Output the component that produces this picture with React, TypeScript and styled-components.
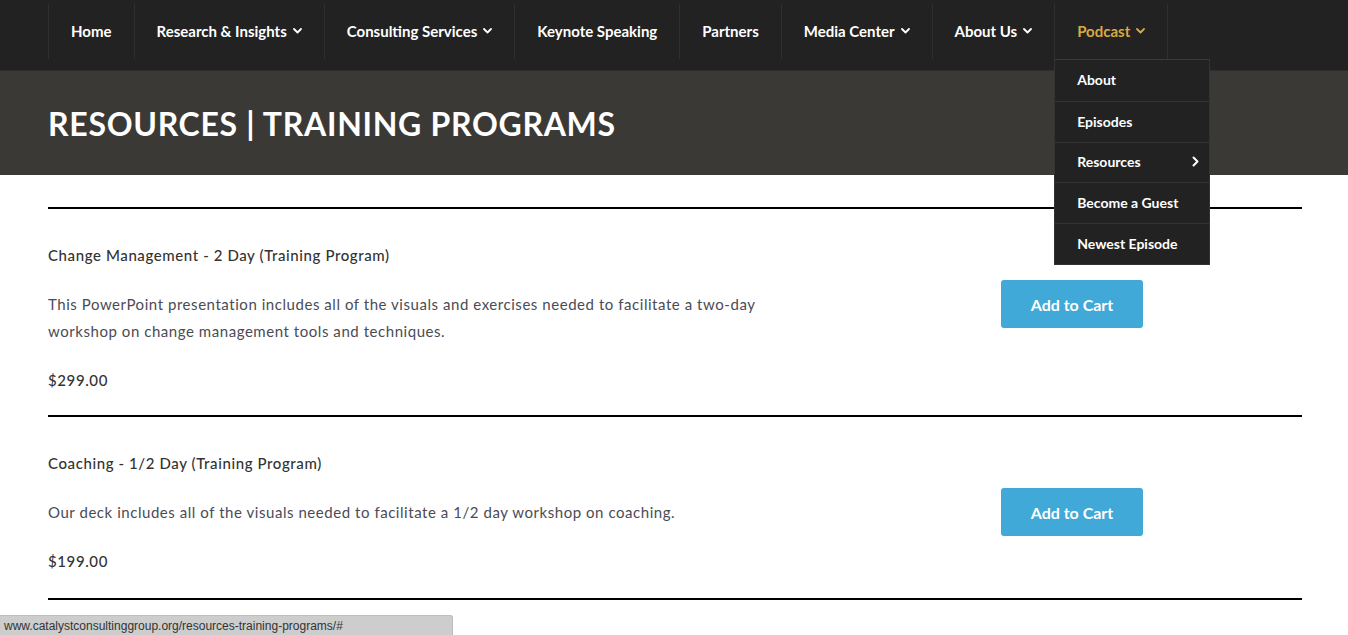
import styled, { createGlobalStyle } from "styled-components";

const GlobalStyle = createGlobalStyle`
  * { box-sizing: border-box; }
  html, body {
    margin: 0;
    padding: 0;
    background: #ffffff;
    font-family: Lato, "Open Sans", sans-serif;
  }
`;

const FONT = `Lato, "Open Sans", sans-serif`;

type TNavItem = {
  label: string;
  hasMenu?: boolean;
  active?: boolean;
};

const NAV_ITEMS: TNavItem[] = [
  { label: "Home" },
  { label: "Research & Insights", hasMenu: true },
  { label: "Consulting Services", hasMenu: true },
  { label: "Keynote Speaking" },
  { label: "Partners" },
  { label: "Media Center", hasMenu: true },
  { label: "About Us", hasMenu: true },
  { label: "Podcast", hasMenu: true, active: true },
];

const PODCAST_MENU = [
  { label: "About" },
  { label: "Episodes" },
  { label: "Resources", sub: true },
  { label: "Become a Guest" },
  { label: "Newest Episode" },
];

type TProduct = {
  title: string;
  description: string;
  price: string;
};

const PRODUCTS: TProduct[] = [
  {
    title: "Change Management - 2 Day (Training Program)",
    description:
      "This PowerPoint presentation includes all of the visuals and exercises needed to facilitate a two-day workshop on change management tools and techniques.",
    price: "$299.00",
  },
  {
    title: "Coaching - 1/2 Day (Training Program)",
    description:
      "Our deck includes all of the visuals needed to facilitate a 1/2 day workshop on coaching.",
    price: "$199.00",
  },
];

const SNav = styled.nav`
  height: 71px;
  background: #222222;
  border-bottom: 1px solid #2c2c2c;
  padding: 4px 48px 0;
  display: flex;
  align-items: flex-start;
  font-family: ${FONT};
  position: relative;
  z-index: 5;
`;

const SNavItem = styled.div<{ $active?: boolean }>`
  position: relative;
  height: 55px;
  padding: 0 22px 2px;
  display: flex;
  align-items: center;
  gap: 6px;
  border-left: 1px solid #2f2f2f;
  color: ${(p) => (p.$active ? "#d9a944" : "#ffffff")};
  font-size: 15px;
  font-weight: 700;
  white-space: nowrap;

  &:last-child {
    border-right: 1px solid #2f2f2f;
  }
`;

const SChevron = styled.svg`
  width: 9px;
  height: 6px;
  margin-top: 1px;
`;

const SDropdown = styled.div`
  position: absolute;
  top: 55px;
  left: -1px;
  width: 156px;
  background: #222222;
  border: 1px solid #333333;
  border-top-color: #3a3a3a;
`;

const SDropdownItem = styled.div`
  height: 40.8px;
  padding: 0 10px 1px 22px;
  display: flex;
  align-items: center;
  justify-content: space-between;
  color: #ffffff;
  font-size: 14px;
  font-weight: 700;
  border-top: 1px solid #333333;

  &:first-child {
    border-top: none;
  }
`;

const SHero = styled.header`
  background: #3a3935;
  height: 104px;
  padding: 0 48px;
  display: flex;
  align-items: center;
`;

const STitle = styled.h1`
  margin: 0;
  color: #ffffff;
  font-family: ${FONT};
  font-size: 32px;
  font-weight: 700;
  letter-spacing: 0.7px;
  text-transform: uppercase;
`;

const SMain = styled.main`
  padding: 32px 46px 40px 48px;
  font-family: ${FONT};
`;

const SProduct = styled.section`
  border-top: 2px solid #000000;
  padding: 35px 0 24px;

  &:last-child {
    padding-bottom: 26px;
    border-bottom: 2px solid #000000;
  }
`;

const SProductTitle = styled.h2`
  margin: 0;
  color: #333333;
  font-size: 15px;
  font-weight: 500;
  letter-spacing: 0.6px;
  line-height: 22px;
`;

const SProductBody = styled.div`
  margin-top: 14px;
  display: grid;
  grid-template-columns: 953px 142px;
  align-items: start;
`;

const SDescription = styled.p`
  margin: 11px 0 0;
  max-width: 760px;
  color: #4b4b55;
  font-size: 15px;
  letter-spacing: 0.55px;
  line-height: 27px;
`;

const SPrice = styled.div`
  margin-top: 24px;
  color: #333333;
  font-size: 15px;
  font-weight: 500;
  letter-spacing: 0.6px;
  line-height: 22px;
`;

const SButton = styled.button`
  height: 48px;
  width: 142px;
  border: none;
  border-radius: 3px;
  background: #40a9d7;
  color: #ffffff;
  font-family: ${FONT};
  font-size: 16px;
  font-weight: 700;
  cursor: pointer;
`;

const SStatusBar = styled.div`
  position: fixed;
  left: 0;
  bottom: 0;
  width: 453px;
  height: 20px;
  padding: 0 4px;
  display: flex;
  align-items: center;
  background: #cdcdcd;
  border-top: 1px solid #bdbdbd;
  border-right: 1px solid #bdbdbd;
  border-top-right-radius: 3px;
  color: #333333;
  font-family: "Liberation Sans", Arial, sans-serif;
  font-size: 12px;
`;

function ChevronDown({ color }: { color: string }) {
  return (
    <SChevron viewBox="0 0 9 6">
      <polyline
        points="1,1 4.5,4.5 8,1"
        fill="none"
        stroke={color}
        strokeWidth="1.8"
        strokeLinecap="round"
        strokeLinejoin="round"
      />
    </SChevron>
  );
}

function ChevronRight() {
  return (
    <svg width="7" height="11" viewBox="0 0 7 11">
      <polyline
        points="1.5,1.5 5.5,5.5 1.5,9.5"
        fill="none"
        stroke="#ffffff"
        strokeWidth="2"
        strokeLinecap="round"
        strokeLinejoin="round"
      />
    </svg>
  );
}

export default function App() {
  return (
    <>
      <GlobalStyle />
      <SNav>
        {NAV_ITEMS.map((item) => (
          <SNavItem key={item.label} $active={item.active}>
            {item.label}
            {item.hasMenu && (
              <ChevronDown color={item.active ? "#d9a944" : "#ffffff"} />
            )}
            {item.active && (
              <SDropdown>
                {PODCAST_MENU.map((sub) => (
                  <SDropdownItem key={sub.label}>
                    {sub.label}
                    {sub.sub && <ChevronRight />}
                  </SDropdownItem>
                ))}
              </SDropdown>
            )}
          </SNavItem>
        ))}
      </SNav>

      <SHero>
        <STitle>Resources | Training Programs</STitle>
      </SHero>

      <SMain>
        {PRODUCTS.map((product) => (
          <SProduct key={product.title}>
            <SProductTitle>{product.title}</SProductTitle>
            <SProductBody>
              <div>
                <SDescription>{product.description}</SDescription>
                <SPrice>{product.price}</SPrice>
              </div>
              <SButton>Add to Cart</SButton>
            </SProductBody>
          </SProduct>
        ))}
      </SMain>

      <SStatusBar>
        www.catalystconsultinggroup.org/resources-training-programs/#
      </SStatusBar>
    </>
  );
}
